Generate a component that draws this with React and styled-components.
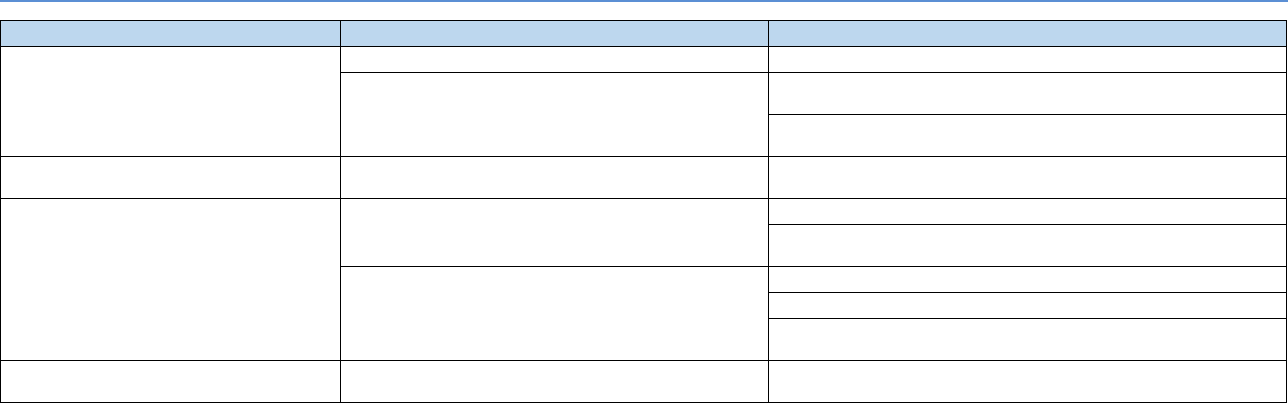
import styled, { createGlobalStyle } from "styled-components";

const GlobalStyle = createGlobalStyle`
  body {
    margin: 0;
    background: #ffffff;
    font-family: "Liberation Sans", Arial, sans-serif;
  }
`;

// each row: its height and the cells it opens (rowSpan where a cell covers more rows)
const ROWS = [
  { h: 26, cells: [{ span: 3 }, {}, {}] },
  { h: 42, cells: [{ span: 2 }, {}] },
  { h: 42, cells: [{}] },
  { h: 42, cells: [{}, {}, {}] },
  { h: 26, cells: [{ span: 5 }, { span: 2 }, {}] },
  { h: 42, cells: [{}] },
  { h: 26, cells: [{ span: 3 }, {}] },
  { h: 26, cells: [{}] },
  { h: 42, cells: [{}] },
  { h: 42, cells: [{}, {}, {}] },
];

function App() {
  return (
    <Page>
      <GlobalStyle />
      <TopRule />
      <Grid>
        <colgroup>
          <col style={{ width: 340 }} />
          <col style={{ width: 428 }} />
          <col />
        </colgroup>
        <thead>
          <Row $h={26}>
            <Head />
            <Head />
            <Head />
          </Row>
        </thead>
        <tbody>
          {ROWS.map((row, i) => (
            <Row key={i} $h={row.h}>
              {row.cells.map((c, j) => (
                <Cell key={j} rowSpan={c.span || 1} />
              ))}
            </Row>
          ))}
        </tbody>
      </Grid>
    </Page>
  );
}

export default App;

const Page = styled.div`
  width: 1288px;
`;

const TopRule = styled.div`
  height: 2px;
  background: #5b8fd4;
  margin-bottom: 18px;
`;

const Grid = styled.table`
  width: 1287px;
  border-collapse: collapse;
  table-layout: fixed;
`;

const Row = styled.tr`
  height: ${({ $h }) => $h}px;
`;

const Head = styled.th`
  background: #bdd7ee;
  border: 1px solid #000;
  padding: 0;
`;

const Cell = styled.td`
  border: 1px solid #000;
  padding: 0;
`;
